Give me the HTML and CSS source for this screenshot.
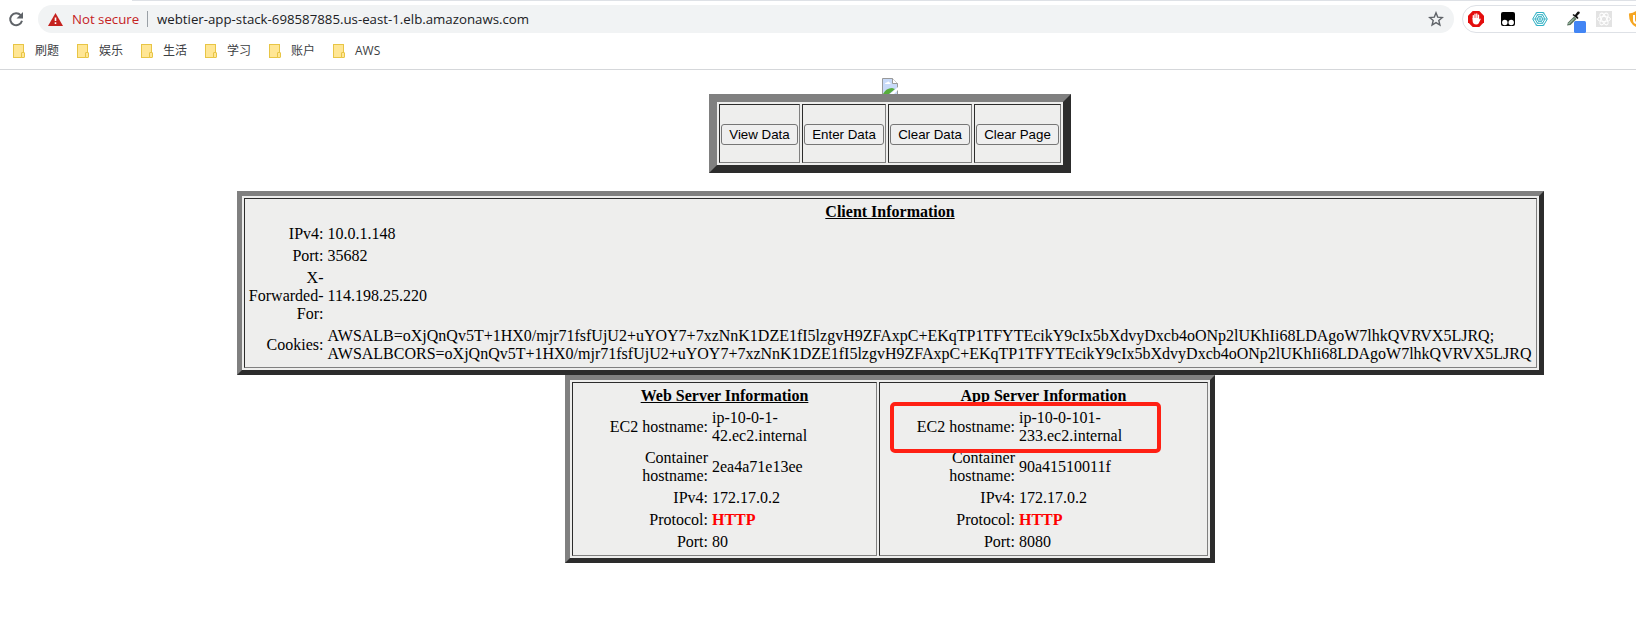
FILE: index.html
```html
<!DOCTYPE html>
<html lang="en">
<head>
<meta charset="utf-8">
<title>Web tier</title>
<link rel="stylesheet" href="styles.css">
</head>
<body>
<header class="browser">
  <div class="toolbar">
    <svg class="reload" width="16" height="16" viewBox="0 0 16 16"><path d="M12.700 4.200A6 6 0 1 0 14 9.800" fill="none" stroke="#5f6368" stroke-width="2"/><path d="M15 1v6.500H8.500z" fill="#5f6368"/></svg>
    <div class="address">
      <svg width="15" height="13" viewBox="0 0 15 13"><path d="M7.500 0L15 13H0z" fill="#c5221f"/><path d="M6.700 4.500h1.600v3.500H6.700zM6.700 9.300h1.600v1.600H6.700z" fill="#fff"/></svg>
      <span class="warning">Not secure</span>
      <span class="divider"></span>
      <span class="url">webtier-app-stack-698587885.us-east-1.elb.amazonaws.com</span>
      <svg class="star" width="16" height="16" viewBox="0 0 16 16"><path d="M8 1.800l1.700 4.300 4.600.4-3.500 3 1.100 4.500L8 11.600 4.100 14l1.100-4.500-3.500-3 4.600-.4z" fill="none" stroke="#5f6368" stroke-width="1.400"/></svg>
    </div>
    <div class="extensions">
      <svg width="16" height="16" viewBox="0 0 16 16"><path d="M4.700 0h6.600L16 4.700v6.600L11.300 16H4.700L0 11.300V4.700z" fill="#e40d0d"/><path d="M5.300 8V4.600M7 8V3.200M8.800 8V3M10.500 8V4.200" stroke="#fff" stroke-width="1.300" stroke-linecap="round"/><path d="M4.600 7h6.500v1.500l.9-1 .8.500-2.200 4.400q-.7 1.100-2.300 1.100-3.700 0-3.700-4z" fill="#fff"/></svg>
      <svg width="16" height="16" viewBox="0 0 16 16"><rect x="1" y="1" width="14" height="14" rx="2"/><circle cx="4.800" cy="11.500" r="2.700" fill="#fff"/><circle cx="11.200" cy="11.500" r="2.700" fill="#fff"/></svg>
      <svg width="16" height="16" viewBox="0 0 16 16" fill="none" stroke="#2fb0c4"><path d="M4.500 1.500h7L15.300 8l-3.800 6.500h-7L.7 8zM5.500 3.700h5L13 8l-2.500 4.300h-5L3 8zM6.500 5.700h3L11 8l-1.500 2.300h-3L5 8z"/><path d="M1 8h14M4 1.500l8 13M12 1.500l-8 13" stroke-width=".6"/></svg>
      <svg class="picker" width="20" height="22" viewBox="0 0 20 22"><path d="M1 14.500l1-3 6-6 2.500 2.500-6 6z" fill="#58715e"/><path d="M2.500 13l5.500-5.500" stroke="#bfe0c7"/><path d="M6.500 4l1-1 1.500 1L11.500.8q2-.8 2.400 1.200L11 5l1.500 2-1 1z" fill="#111"/><rect x="8" y="10" width="12" height="12" rx="1.500" fill="#4285f4"/></svg>
      <svg width="16" height="16" viewBox="0 0 16 16"><path d="M0 0h16v16H0z" fill="#e3e3e3"/><g fill="none" stroke="#fff"><ellipse cx="8" cy="8" rx="6.500" ry="2.600"/><ellipse cx="8" cy="8" rx="6.500" ry="2.600" transform="rotate(60 8 8)"/><ellipse cx="8" cy="8" rx="6.500" ry="2.600" transform="rotate(120 8 8)"/></g></svg>
      <svg width="16" height="16" viewBox="0 0 16 16"><path d="M8 0q3 2 7 2.500Q15.500 12 8 16 .5 12 1 2.500 5 2 8 0z" fill="#f5a623"/><path d="M5 4h2v5q0 2 2 2v2q-4 0-4-4z" fill="#fff"/></svg>
    </div>
  </div>
  <nav class="bookmarks">
    <span class="bookmark"><i class="folder"></i>刷题</span>
    <span class="bookmark"><i class="folder"></i>娱乐</span>
    <span class="bookmark"><i class="folder"></i>生活</span>
    <span class="bookmark"><i class="folder"></i>学习</span>
    <span class="bookmark"><i class="folder"></i>账户</span>
    <span class="bookmark"><i class="folder"></i>AWS</span>
  </nav>
</header>
<main>
  <svg class="broken" width="16" height="16" viewBox="0 0 16 16"><path d="M.5 16V.5h10l5 5V16" fill="#c8daf8" stroke="#999"/><path d="M10.500.5v5h5" fill="#fff" stroke="#999"/><path d="M3 6q0-2 2-1.500 1.500-2 2.500 0Q9 5 8.500 6z" fill="#fff"/><path d="M1 16q3-6 9-6l3 1-6 5z" fill="#57ad3c"/><path d="M8 16l8-7v3l-4 4z" fill="#fff"/></svg>
  <table class="frame actions">
    <colgroup><col class="col-view"><col class="col-enter"><col class="col-data"><col class="col-page"></colgroup>
    <tr><td><button>View Data</button></td><td><button>Enter Data</button></td><td><button>Clear Data</button></td><td><button>Clear Page</button></td></tr>
  </table>
  <table class="frame client">
    <tr><td>
      <table class="facts">
        <tr><th colspan="2">Client Information</th></tr>
        <tr><td>IPv4:</td><td>10.0.1.148</td></tr>
        <tr><td>Port:</td><td>35682</td></tr>
        <tr><td>X-<br>Forwarded-<br>For:</td><td>114.198.25.220</td></tr>
        <tr><td>Cookies:</td><td>AWSALB=oXjQnQv5T+1HX0/mjr71fsfUjU2+uYOY7+7xzNnK1DZE1fI5lzgvH9ZFAxpC+EKqTP1TFYTEcikY9cIx5bXdvyDxcb4oONp2lUKhIi68LDAgoW7lhkQVRVX5LJRQ;<br>AWSALBCORS=oXjQnQv5T+1HX0/mjr71fsfUjU2+uYOY7+7xzNnK1DZE1fI5lzgvH9ZFAxpC+EKqTP1TFYTEcikY9cIx5bXdvyDxcb4oONp2lUKhIi68LDAgoW7lhkQVRVX5LJRQ</td></tr>
      </table>
    </td></tr>
  </table>
  <table class="frame servers">
    <tr>
      <td class="web">
        <table class="facts">
          <tr><th colspan="2">Web Server Information</th></tr>
          <tr><td>EC2 hostname:</td><td>ip-10-0-1-<br>42.ec2.internal</td></tr>
          <tr><td>Container<br>hostname:</td><td>2ea4a71e13ee</td></tr>
          <tr><td>IPv4:</td><td>172.17.0.2</td></tr>
          <tr><td>Protocol:</td><td class="http">HTTP</td></tr>
          <tr><td>Port:</td><td>80</td></tr>
        </table>
      </td>
      <td class="app">
        <div class="highlight"></div>
        <table class="facts">
          <tr><th colspan="2">App Server Information</th></tr>
          <tr><td>EC2 hostname:</td><td>ip-10-0-101-<br>233.ec2.internal</td></tr>
          <tr><td>Container<br>hostname:</td><td>90a41510011f</td></tr>
          <tr><td>IPv4:</td><td>172.17.0.2</td></tr>
          <tr><td>Protocol:</td><td class="http">HTTP</td></tr>
          <tr><td>Port:</td><td>8080</td></tr>
        </table>
      </td>
    </tr>
  </table>
</main>
</body>
</html>
```

FILE: styles.css
```css
body { margin: 0; background: #fff; color: #000; font: 16px/18px "Liberation Serif", serif; overflow: hidden; }
.browser { box-sizing: border-box; height: 70px; border-bottom: 1px solid #d5d7da; font-family: "Open Sans", "Noto Sans CJK SC", sans-serif; background: linear-gradient(#dee1e6, #dee1e6) 132px 0 / 100% 1px no-repeat; overflow: hidden; }
.toolbar { display: flex; align-items: center; padding-top: 5px; height: 28px; }
.reload { flex: none; margin: 0 14px 0 8px; }
.address { flex: none; box-sizing: border-box; display: flex; align-items: center; width: 1416px; height: 28px; padding: 0 10px; border-radius: 14px; background: #f1f3f4; font-size: 13.25px; color: #202124; }
.address svg, .address span { flex: none; }
.warning { margin-left: 9px; width: 67px; color: #c5221f; white-space: nowrap; }
.divider { width: 1px; height: 16px; margin: 0 9px 0 8px; background: #9aa0a6; }
.address .star { margin-left: auto; }
.extensions { flex: none; box-sizing: border-box; display: flex; align-items: center; gap: 16px; width: 200px; height: 28px; margin-left: 8px; padding-left: 5px; border: 1px solid #dee1e6; border-radius: 14px; }
.extensions svg { flex: none; }
.picker { margin: 6px -6px 0 2px; }
.bookmarks { display: flex; padding: 8px 0 0 13px; font-size: 12px; color: #3c4043; }
.bookmark { flex: none; display: flex; align-items: center; gap: 11px; width: 64px; height: 20px; white-space: nowrap; }
.folder { position: relative; flex: none; box-sizing: border-box; width: 11px; height: 14px; border: 1px solid #e8c545; background: #ffe694; }
.folder::after { content: ""; position: absolute; right: -2px; bottom: -1px; width: 2px; height: 4px; border: 1px solid #e8c545; border-radius: 1px; background: #ffe694; }
main { display: flex; flex-direction: column; align-items: center; padding: 8px 0 0 144px; }
.broken { display: block; }
table { border-spacing: 2px; }
.frame { box-sizing: border-box; border-style: solid; border-color: #808080 #2c2c2c #2c2c2c #808080; background: #eeeeed; }
.frame > tbody > tr > td { border: 1px solid; border-color: #2c2c2c #808080 #808080 #2c2c2c; padding: 1px; }
.actions { width: 362px; height: 79px; border-width: 8px; table-layout: fixed; }
.col-view { width: 81px; }
.col-enter, .col-data { width: 84px; }
.col-page { width: 87px; }
.frame.actions > tbody > tr > td { padding-top: 3px; }
button { display: block; width: 100%; height: 21px; padding: 0; border: 1px solid #767676; border-radius: 3px; background: #efefef; color: #000; font: 13.333px "Liberation Sans", sans-serif; white-space: nowrap; }
.client { width: 1307px; height: 184px; margin-top: 18px; border-width: 5px; }
.servers { width: 650px; height: 188px; border-width: 5px; table-layout: fixed; }
.facts { width: 100%; }
.facts td { padding: 1px; }
.facts td:first-child { text-align: right; white-space: nowrap; }
.facts th { padding: 1px; text-decoration: underline; }
.client .facts td:first-child { width: 75px; }
.web { width: 301px; }
.web .facts td:first-child { width: 131px; }
.app { position: relative; }
.app .facts td:first-child { width: 131px; }
.facts td.http { color: #f00; font-weight: bold; }
.highlight { position: absolute; box-sizing: border-box; left: 10px; top: 19px; width: 271px; height: 51px; border: 4px solid #ff2014; border-radius: 5px; }
```
